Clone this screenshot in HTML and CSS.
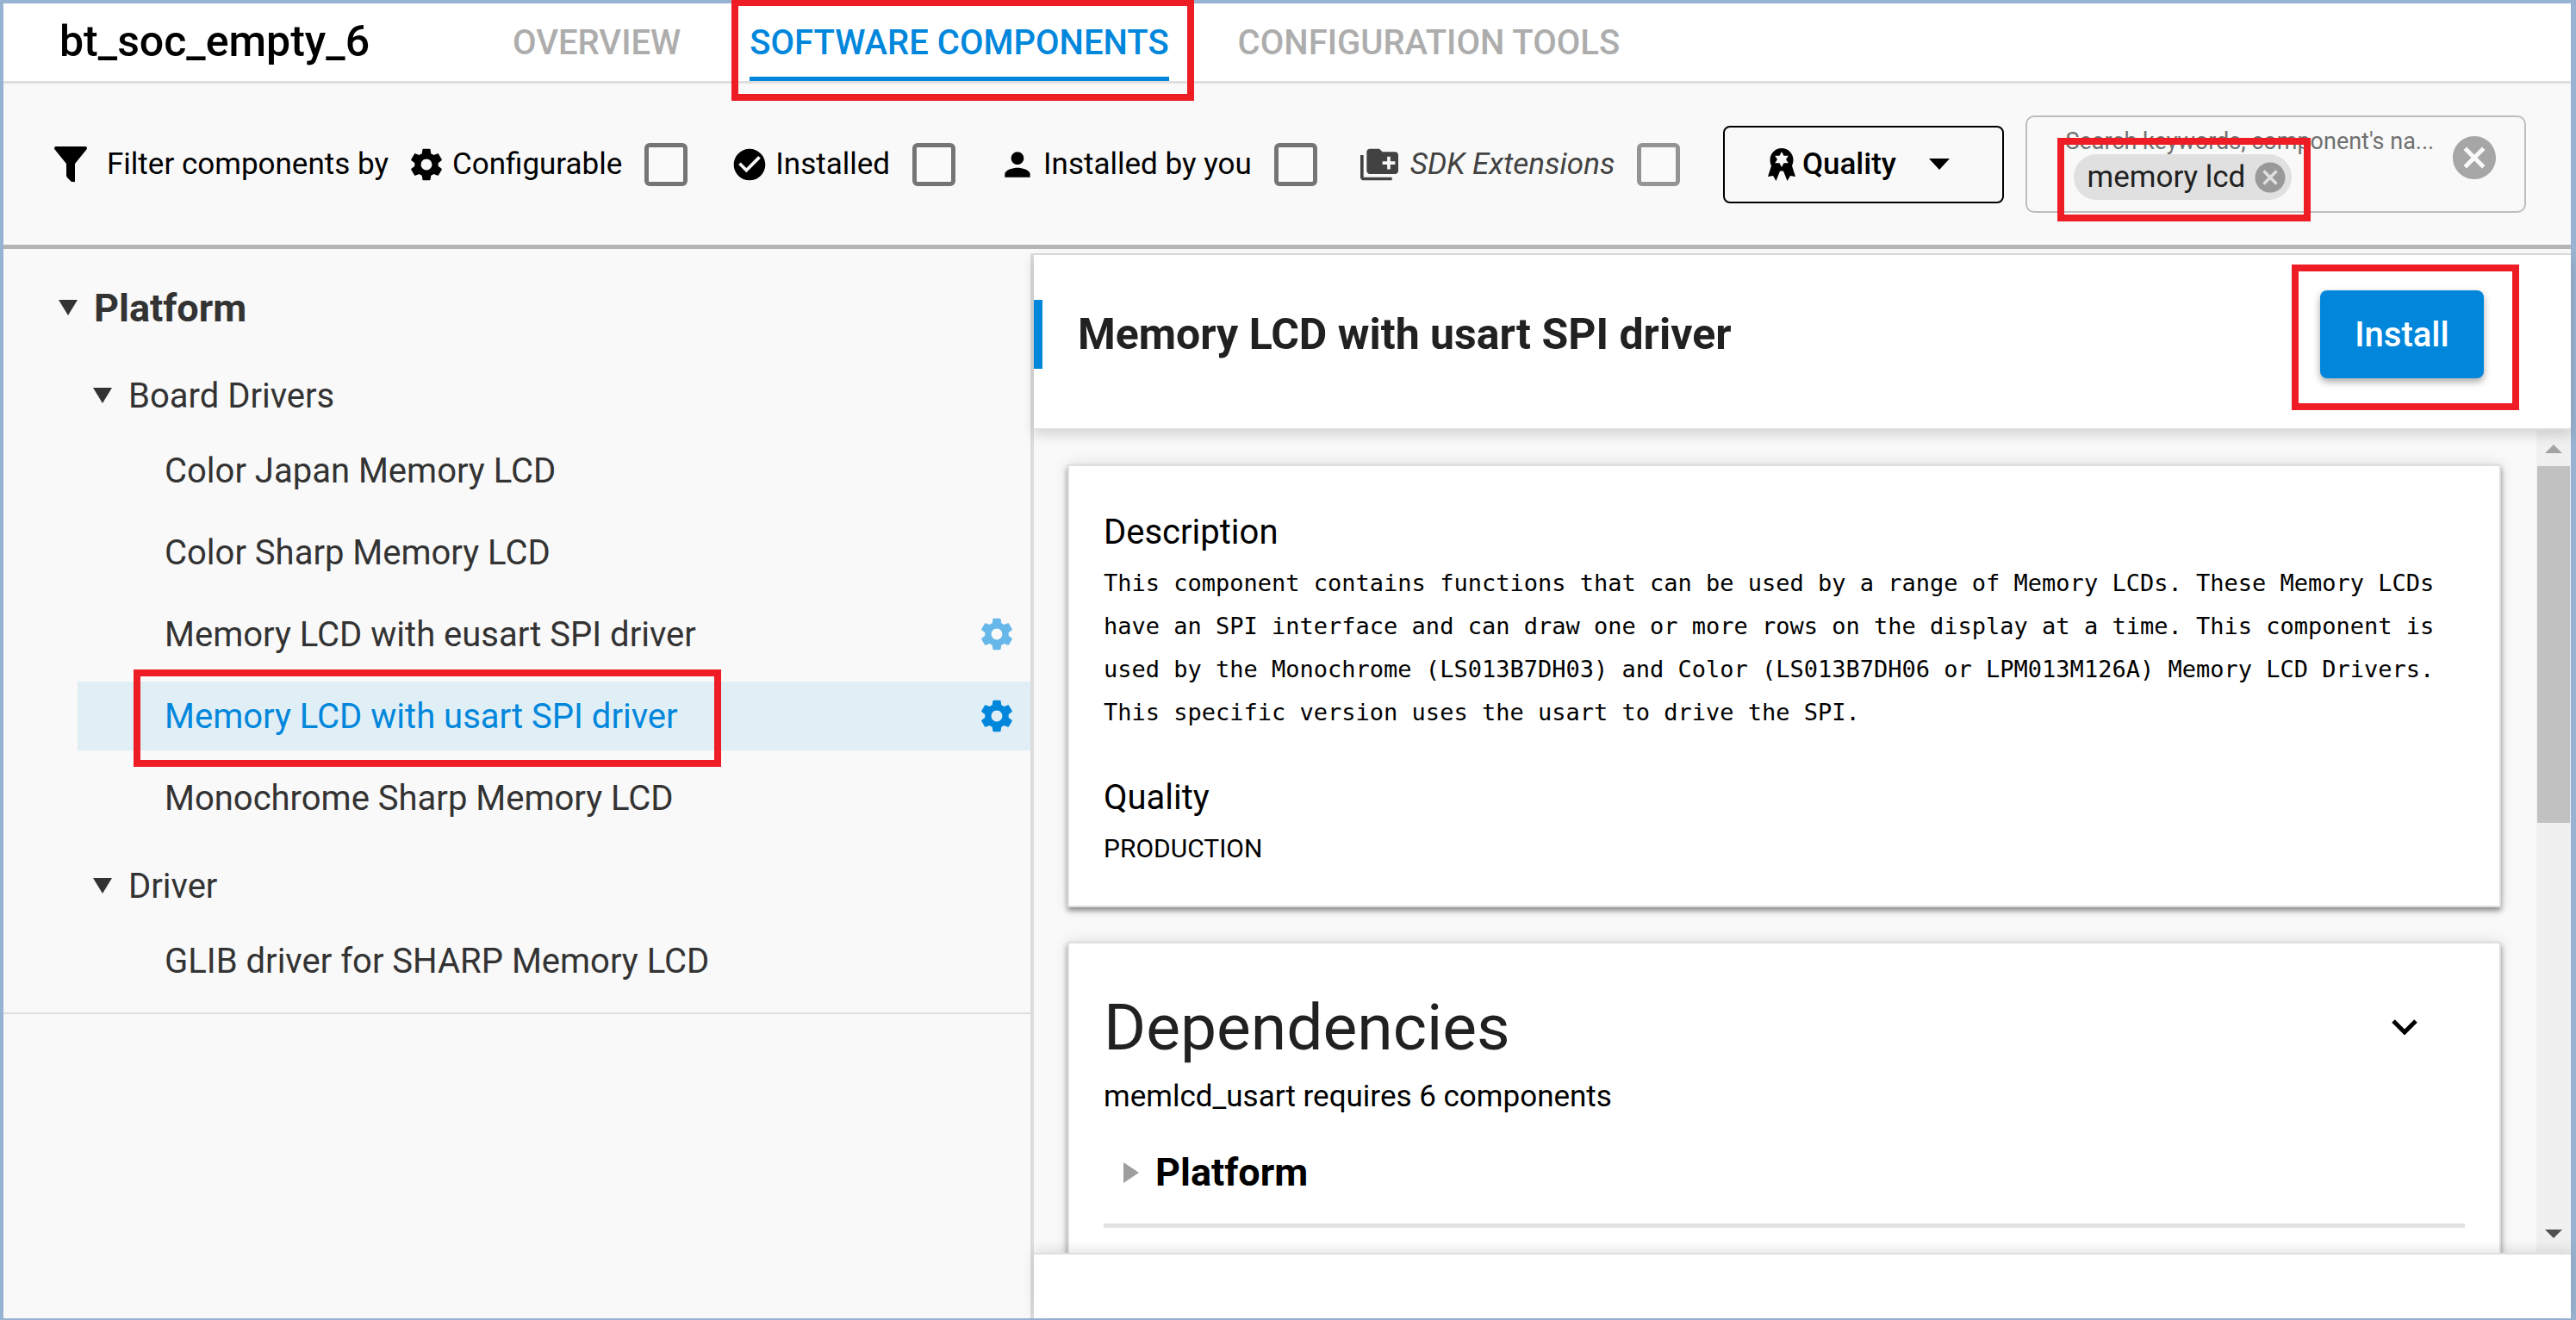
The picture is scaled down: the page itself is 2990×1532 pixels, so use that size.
FILE: index.html
```html
<!DOCTYPE html>
<html lang="en">
<head>
<meta charset="utf-8">
<title>bt_soc_empty_6 - Software Components</title>
<link rel="stylesheet" href="styles.css">
</head>
<body>
<svg class="defs" aria-hidden="true">
  <symbol id="gear" viewBox="0 0 24 24"><path fill-rule="evenodd" d="M19.43 12.98c.04-.32.07-.64.07-.98s-.03-.66-.07-.98l2.11-1.65c.19-.15.24-.42.12-.64l-2-3.46c-.12-.22-.39-.3-.61-.22l-2.49 1c-.52-.4-1.08-.73-1.69-.98l-.38-2.65C14.46 2.18 14.25 2 14 2h-4c-.25 0-.46.18-.49.42l-.38 2.65c-.61.25-1.17.59-1.69.98l-2.49-1c-.23-.09-.49 0-.61.22l-2 3.46c-.13.22-.07.49.12.64l2.11 1.65c-.04.32-.07.65-.07.98s.03.66.07.98l-2.11 1.65c-.19.15-.24.42-.12.64l2 3.46c.12.22.39.3.61.22l2.49-1c.52.4 1.08.73 1.69.98l.38 2.65c.03.24.24.42.49.42h4c.25 0 .46-.18.49-.42l.38-2.65c.61-.25 1.17-.59 1.69-.98l2.49 1c.23.09.49 0 .61-.22l2-3.46c.12-.22.07-.49-.12-.64l-2.11-1.65zM12 15.500c-1.930 0-3.500-1.570-3.500-3.500s1.570-3.500 3.500-3.500 3.500 1.570 3.500 3.500-1.570 3.500-3.500 3.500z"/></symbol>
  <symbol id="cancel" viewBox="0 0 24 24"><path d="M12 2C6.470 2 2 6.470 2 12s4.470 10 10 10 10-4.470 10-10S17.530 2 12 2zm5 13.590L15.590 17 12 13.410 8.410 17 7 15.590 10.590 12 7 8.410 8.410 7 12 10.590 15.590 7 17 8.410 13.410 12 17 15.590z"/></symbol>
</svg>
<div class="app">
  <header class="topbar">
    <h1 class="project">bt_soc_empty_6</h1>
    <nav class="tabs">
      <a class="tab" href="#overview">OVERVIEW</a>
      <a class="tab tab-active" href="#components">SOFTWARE COMPONENTS<span class="mark mark-tab"></span></a>
      <a class="tab" href="#tools">CONFIGURATION TOOLS</a>
    </nav>
  </header>

  <section class="filters">
    <svg class="funnel" viewBox="0 0 38 42"><path d="M2 0h34q2 0 2 2 0 1-1 2L24 20v20q0 2-2 1h-2l-5-5q-1-1-1-3V20L1 4Q0 3 0 2 0 0 2 0z"/></svg>
    <span class="filter-title">Filter components by</span>
    <label class="filter"><svg class="icon"><use href="#gear"/></svg><span>Configurable</span><input type="checkbox"></label>
    <label class="filter f-next"><svg class="icon" viewBox="0 0 24 24"><path d="M12 2C6.500 2 2 6.500 2 12s4.500 10 10 10 10-4.500 10-10S17.500 2 12 2zm-2 15l-5-5 1.410-1.410L10 14.170l7.590-7.590L19 8l-9 9z"/></svg><span>Installed</span><input type="checkbox"></label>
    <label class="filter f-next"><svg class="icon" viewBox="0 0 24 24"><path d="M12 12c2.210 0 4-1.790 4-4s-1.790-4-4-4-4 1.790-4 4 1.790 4 4 4zm0 2c-2.670 0-8 1.340-8 4v2h16v-2c0-2.660-5.330-4-8-4z"/></svg><span>Installed by you</span><input type="checkbox"></label>
    <label class="filter f-next f-sdk"><svg class="icon" viewBox="0 0 24 24"><path d="M2 6H0v14c0 1.100.9 2 2 2h18v-2H2V6zm20-2h-8l-2-2H6c-1.100 0-2 .9-2 2v12c0 1.100.9 2 2 2h16c1.100 0 2-.9 2-2V6c0-1.100-.9-2-2-2zm0 8h-3v3h-2v-3h-3v-2h3V7h2v3h3v2z"/></svg><span>SDK Extensions</span><input type="checkbox"></label>
    <button class="quality" type="button"><svg class="ribbon" viewBox="0 0 32 38"><path fill-rule="evenodd" d="M16 0C23.500 0 29.500 6 29.500 13.500c0 2.800-.7 5-1.500 7L32 33l-6-1-3.500 6L18 26.500h-4L9.500 38 6 32l-6 1 4-12.500c-.8-2-1.500-4.200-1.500-7C2.500 6 8.500 0 16 0zM16 4l-2.500 4.700H8.200L11 13l-2.800 4.300h5.300L16 22l2.500-4.700h5.300L21 13l2.800-4.300h-5.300z"/></svg><span>Quality</span><svg class="caret" viewBox="0 0 24 13"><path d="M0 0h24L12 13z"/></svg></button>
    <div class="search">
      <div class="search-main">
        <label class="search-label" for="q">Search keywords, component's na...</label>
        <div class="chips">
          <span class="chip">memory lcd<button type="button" class="chip-x" aria-label="Remove"><svg><use href="#cancel"/></svg></button><span class="mark mark-chip"></span></span>
          <input id="q" class="search-input" type="text">
        </div>
      </div>
      <button type="button" class="clear" aria-label="Clear"><svg><use href="#cancel"/></svg></button>
    </div>
  </section>

  <main class="body">
    <aside class="side">
      <div class="tree">
        <h2 class="node node-root"><svg class="tri" viewBox="0 0 22 18"><path d="M0 0h22L11 18z"/></svg>Platform</h2>
        <h3 class="node node-group"><svg class="tri" viewBox="0 0 22 18"><path d="M0 0h22L11 18z"/></svg>Board Drivers</h3>
        <ul class="leaves">
          <li><a class="leaf" href="#a">Color Japan Memory LCD</a></li>
          <li><a class="leaf" href="#b">Color Sharp Memory LCD</a></li>
          <li><a class="leaf" href="#c">Memory LCD with eusart SPI driver<svg class="leaf-gear leaf-gear-dim"><use href="#gear"/></svg></a></li>
          <li><a class="leaf leaf-active" href="#d"><span class="leaf-text">Memory LCD with usart SPI driver<span class="mark mark-leaf"></span></span><svg class="leaf-gear"><use href="#gear"/></svg></a></li>
          <li><a class="leaf" href="#e">Monochrome Sharp Memory LCD</a></li>
        </ul>
        <h3 class="node node-group"><svg class="tri" viewBox="0 0 22 18"><path d="M0 0h22L11 18z"/></svg>Driver</h3>
        <ul class="leaves">
          <li><a class="leaf" href="#f">GLIB driver for SHARP Memory LCD</a></li>
        </ul>
      </div>
    </aside>

    <section class="detail">
      <header class="detail-head">
        <h2 class="detail-title">Memory LCD with usart SPI driver</h2>
        <div class="install-wrap"><button type="button" class="install">Install</button><span class="mark mark-install"></span></div>
      </header>
      <div class="scroll">
        <div class="cards">
          <article class="card">
            <h3 class="card-label">Description</h3>
            <p class="desc">This component contains functions that can be used by a range of Memory LCDs. These Memory LCDs have an SPI interface and can draw one or more rows on the display at a time. This component is used by the Monochrome (LS013B7DH03) and Color (LS013B7DH06 or LPM013M126A) Memory LCD Drivers. This specific version uses the usart to drive the SPI.</p>
            <h3 class="card-label">Quality</h3>
            <p class="quality-value">PRODUCTION</p>
          </article>
          <article class="card card-deps">
            <div class="deps-head"><h3 class="deps-title">Dependencies</h3><button type="button" class="toggle" aria-label="Collapse"><svg viewBox="0 0 30 18"><path d="M2 2l13 13L28 2" fill="none" stroke="#000" stroke-width="5"/></svg></button></div>
            <p class="deps-note">memlcd_usart requires 6 components</p>
            <div class="deps-row"><svg viewBox="0 0 18 24"><path d="M0 0l18 12L0 24z"/></svg>Platform</div>
          </article>
        </div>
        <div class="bar">
          <svg viewBox="0 0 20 10"><path d="M10 0l10 10H0z"/></svg>
          <div class="thumb"></div>
          <svg class="down" viewBox="0 0 20 10"><path d="M0 0h20L10 10z"/></svg>
        </div>
      </div>
      <footer class="detail-foot"></footer>
    </section>
  </main>
</div>
</body>
</html>
```
FILE: styles.css
```css
* { box-sizing: border-box; }

body {
  margin: 0;
  font-family: Roboto, "Liberation Sans", sans-serif;
  color: #000;
  background: #f9f9f9;
}

h1, h2, h3, p, ul { margin: 0; padding: 0; font-weight: 400; }
ul { list-style: none; }
a { color: inherit; text-decoration: none; }
svg { display: block; flex: none; fill: currentColor; }
button { font: inherit; color: inherit; background: none; border: 0; padding: 0; }
.defs { position: absolute; width: 0; height: 0; }

.app {
  display: flex;
  flex-direction: column;
  height: 100vh;
  border: 4px solid #98b3d1;
  border-bottom-width: 2px;
  border-right-width: 6px;
}

/* Red call-out frames drawn over the interface */
.mark {
  position: absolute;
  border: 8px solid #ee1c25;
  pointer-events: none;
}
.mark-tab { inset: -5px -29px -23px -21px; }
.mark-chip { inset: -19px -22px -25px -19px; }
.mark-leaf { inset: -31px -50px -35px -36px; }
.mark-install { inset: -30px -41px -37px -33px; }

.topbar {
  display: flex;
  flex: none;
  height: 93px;
  padding-left: 65px;
  background: #fff;
  border-bottom: 3px solid #dfdfdf;
}
.project { width: 526px; font-size: 50px; line-height: 88px; font-weight: 500; }
.tabs { display: flex; gap: 80px; }
.tab {
  position: relative;
  height: 90px;
  font-size: 40px;
  font-weight: 500;
  line-height: 92px;
  color: #adadad;
}
.tab-active { color: #0087dc; box-shadow: inset 0 -5px #0087dc; }

.filters {
  display: flex;
  flex: none;
  align-items: center;
  height: 192px;
  padding: 0 52px 0 59px;
  font-size: 35px;
  background: #f9f9f9;
  border-bottom: 5px solid #b5b5b5;
}
.funnel { width: 38px; height: 42px; margin-right: 23px; }
.filter-title { margin-right: 22px; }
.filter { display: flex; align-items: center; }
.filter input {
  appearance: none;
  width: 50px;
  height: 50px;
  margin: 0 0 0 26px;
  border: 5px solid #757575;
  border-radius: 6px;
  background: #fafafa;
}
.icon { width: 44px; height: 44px; margin-right: 8px; }
.f-next { margin-left: 50px; }
.f-sdk { font-style: italic; color: #424242; }
.f-sdk input { border-color: #949494; }
.f-sdk .icon { margin-right: 14px; }

.quality {
  display: flex;
  align-items: center;
  justify-content: center;
  width: 326px;
  height: 90px;
  margin-left: 50px;
  padding-right: 12px;
  font-weight: 500;
  border: 2px solid #000;
  border-radius: 8px;
}
.ribbon { width: 32px; height: 38px; margin-right: 8px; }
.caret { width: 24px; height: 13px; margin-left: 38px; }

.search {
  display: flex;
  flex: 1;
  align-items: center;
  justify-content: space-between;
  height: 113px;
  margin-left: 25px;
  padding: 0 28px 0 44px;
  border: 2px solid #bdbdbd;
  border-radius: 10px;
}
.search-main { flex: 1; }
.search-label { display: block; font-size: 27px; line-height: 30px; color: #707070; }
.chips { display: flex; padding-left: 10px; }
.chip {
  position: relative;
  display: flex;
  flex: none;
  align-items: center;
  height: 53px;
  padding: 0 4px 0 15px;
  gap: 8px;
  font-size: 35px;
  color: #212121;
  background: #e0e0e0;
  border-radius: 27px;
}
.chip-x, .chip-x svg { width: 42px; height: 42px; color: #999; }
.search-input { flex: 1; min-width: 0; border: 0; background: none; outline: 0; }
.clear { margin-bottom: 16px; color: #a6a6a6; }
.clear svg { width: 60px; height: 60px; }

.body { display: flex; flex: 1; min-height: 0; }
.side { width: 40%; }
.tree { padding: 34px 0 5px; color: #333; border-bottom: 2px solid #dfdfdf; }
.node { display: flex; align-items: center; gap: 19px; }
.node-root { height: 68px; margin-bottom: 21px; padding-left: 64px; font-size: 45px; font-weight: 700; }
.node-group { height: 94px; padding-left: 104px; font-size: 40px; }
.tri { width: 22px; height: 18px; }
.leaves { display: flex; flex-direction: column; }
.leaf {
  display: flex;
  align-items: center;
  justify-content: space-between;
  height: 80px;
  margin: 0 0 15px 86px;
  padding: 0 17px 0 101px;
  font-size: 40px;
}
.leaf-active { color: #0087dc; background: #e0eef6; }
.leaf-text { position: relative; }
.leaf-gear { width: 44px; height: 44px; color: #0087dc; }
.leaf-gear-dim { color: #66b7ea; }

.detail {
  display: flex;
  flex: 1;
  flex-direction: column;
  min-width: 0;
  margin-top: 5px;
  border: solid #dcdcdc;
  border-width: 2px 0 0 4px;
}
.detail-head {
  position: relative;
  z-index: 1;
  display: flex;
  flex: none;
  align-items: flex-start;
  justify-content: space-between;
  height: 203px;
  padding: 41px 101px 0 0;
  background: #fff;
  border-bottom: 2px solid #dfdfdf;
  box-shadow: 0 6px 14px rgba(0, 0, 0, .15);
}
.detail-title {
  height: 80px;
  margin-top: 11px;
  padding-left: 41px;
  border-left: 10px solid #0087dc;
  color: #212121;
  font-size: 50px;
  line-height: 80px;
  font-weight: 700;
}
.install-wrap { position: relative; }
.install {
  display: block;
  width: 190px;
  height: 102px;
  color: #fff;
  font-size: 40px;
  font-weight: 500;
  background: #0087dc;
  border-radius: 8px;
  box-shadow: 0 4px 8px rgba(0, 0, 0, .35);
}

.scroll { display: flex; flex: 1; min-height: 0; overflow: hidden; }
.cards { flex: 1; padding: 40px 41px 0 39px; }
.card {
  margin-bottom: 40px;
  padding: 52px 40px 41px;
  background: #fff;
  border: 2px solid #dfdfdf;
  box-shadow: 0 4px 6px rgba(0, 0, 0, .4), 0 0 16px rgba(0, 0, 0, .12);
}
.card-label { font-size: 40px; line-height: 50px; }
.desc {
  margin: 9px 0 49px;
  font-family: "DejaVu Sans Mono", monospace;
  font-size: 27px;
  line-height: 50px;
}
.quality-value { font-size: 30px; line-height: 50px; margin-top: 9px; }

.card-deps { padding-top: 52px; min-height: 500px; }
.deps-head { display: flex; align-items: center; justify-content: space-between; padding-right: 55px; }
.deps-title { font-size: 75px; line-height: 90px; color: #212121; }
.toggle svg { width: 30px; height: 18px; }
.deps-note { margin-top: 11px; font-size: 35px; line-height: 50px; }
.deps-row {
  display: flex;
  align-items: center;
  gap: 19px;
  height: 127px;
  padding: 3px 0 0 23px;
  font-size: 45px;
  font-weight: 700;
  border-bottom: 5px solid #e2e2e2;
}
.deps-row svg { width: 18px; height: 24px; color: #9e9e9e; }

.bar {
  display: flex;
  flex-direction: column;
  align-items: center;
  width: 40px;
  padding: 17px 0;
  color: #a3a3a3;
  background: #f0f0f0;
}
.bar svg { width: 20px; height: 10px; }
.thumb { width: 38px; height: 45%; margin: 15px 0 auto; background: #c1c1c1; }
.bar .down { color: #505050; }

.detail-foot {
  position: relative;
  flex: none;
  height: 76px;
  background: #fff;
  border-top: 2px solid #dfdfdf;
  box-shadow: 0 -4px 14px rgba(0, 0, 0, .1);
}
```
